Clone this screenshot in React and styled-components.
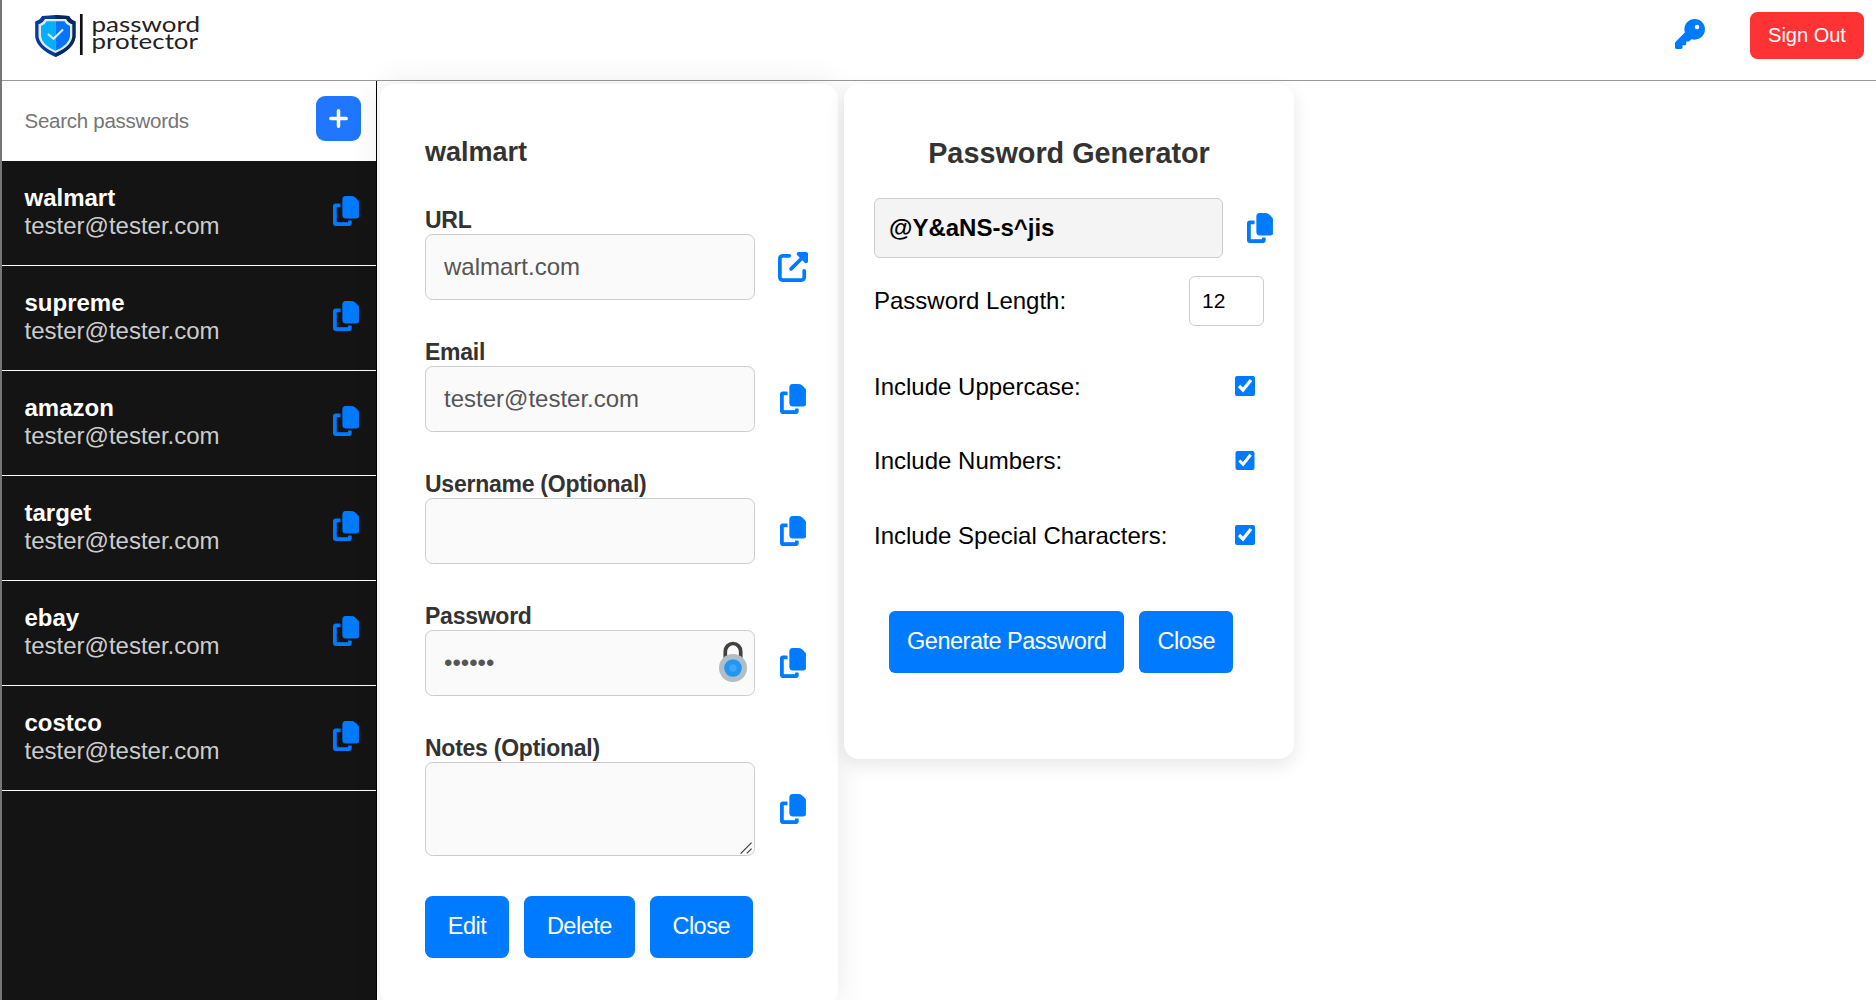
import React from "react";
import styled, { createGlobalStyle, css } from "styled-components";
import { FaKey, FaUpRightFromSquare } from "react-icons/fa6";

const GlobalStyle = createGlobalStyle`
  *, *::before, *::after { box-sizing: border-box; }
  html, body { margin: 0; height: 100%; overflow: hidden; }
  body, input, textarea, button { font-family: "Liberation Sans", Arial, sans-serif; }
  body { background: #fff; color: #000; font-size: 24px; }
`;

const Page = styled.div`
  display: flex;
  flex-direction: column;
  height: 1000px;
  border-left: 2px solid #767676;
  overflow: hidden;
`;

const Header = styled.header`
  flex: none;
  display: flex;
  align-items: flex-start;
  justify-content: space-between;
  height: 81px;
  padding: 0 12px 0 32px;
  border-bottom: 1px solid #999;
`;

const LogoSvg = styled.svg`
  display: block;
  width: 180px;
  height: 70px;
`;

const HeaderActions = styled.div`
  display: flex;
  align-items: flex-start;
  gap: 45px;
  padding-top: 12px;
`;

const IconButton = styled.button`
  flex: none;
  display: flex;
  align-items: center;
  justify-content: center;
  width: 30px;
  height: 30px;
  padding: 0;
  margin-top: ${(p) => p.$top || 0}px;
  border: 0;
  background: none;
  color: #007bff;
  font-size: 30px;
  cursor: pointer;
  svg { display: block; flex: none; }
`;

const SignOut = styled.button`
  width: 114px;
  height: 47px;
  padding: 0 0 1px;
  border: 0;
  border-radius: 7.5px;
  background: #ff3333;
  color: #fff;
  font-size: 20px;
`;

const Main = styled.main`
  flex: 1;
  min-height: 0;
  display: flex;
  align-items: flex-start;
`;

const Sidebar = styled.aside`
  flex: none;
  width: 375px;
  height: 919px;
  border-right: 1px solid #000;
  background: #141414;
`;

const SearchBar = styled.div`
  display: flex;
  align-items: flex-start;
  justify-content: space-between;
  height: 80px;
  padding: 15px 15px 0 22.5px;
  background: #fff;
`;

const SearchInput = styled.input`
  width: 240px;
  height: 50px;
  padding: 0;
  border: 0;
  outline: 0;
  background: none;
  font-size: 20.5px;
  letter-spacing: -0.27px;
  &::placeholder { color: #757575; opacity: 1; }
`;

const AddButton = styled.button`
  display: flex;
  align-items: center;
  justify-content: center;
  width: 45px;
  height: 45px;
  padding: 0;
  border: 0;
  border-radius: 9px;
  background: #2176ff;
  color: #fff;
`;

const Entry = styled.div`
  display: flex;
  justify-content: space-between;
  height: 105px;
  padding: 23px 15px 0 22.5px;
  border-bottom: 1px solid #fff;
`;

const EntryText = styled.div`
  display: flex;
  flex-direction: column;
  line-height: 28px;
  color: #ccc;
`;

const EntryName = styled.strong`
  color: #fff;
`;

const Card = styled.section`
  flex: none;
  background: #fff;
`;

const DetailCard = styled(Card)`
  width: 458px;
  height: 921px;
  margin: 3px 0 0 3px;
  padding: 53px 30px 0 45px;
  border-radius: 15px;
  box-shadow: 0 0 32px rgba(0, 0, 0, 0.09);
`;

const DetailTitle = styled.h3`
  margin: 0;
  font-size: 27px;
  line-height: 31px;
  color: #333;
`;

const Fields = styled.div`
  display: flex;
  flex-direction: column;
  gap: 40px;
  margin-top: 40px;
`;

const Field = styled.div`
  display: flex;
  flex-direction: column;
`;

const Label = styled.label`
  height: 26px;
  font-size: 23px;
  letter-spacing: -0.25px;
  line-height: 24px;
  font-weight: bold;
  color: #333;
`;

const FieldRow = styled.div`
  display: flex;
  align-items: center;
  gap: 23px;
`;

const InputWrap = styled.div`
  position: relative;
  display: flex;
  width: 330px;
`;

const inputLook = css`
  display: block;
  width: 100%;
  height: ${(p) => p.$height || 66}px;
  padding: 0 18px;
  border: 1px solid #ccc;
  border-radius: 7.5px;
  outline: 0;
  background: #fafafa;
  color: #555;
  font-size: 24px;
`;

const Input = styled.input`${inputLook}`;
const TextArea = styled.textarea`
  ${inputLook}
  resize: none;
`;

const LockBadge = styled.svg`
  position: absolute;
  top: 10px;
  right: 7.5px;
  width: 30px;
  height: 43px;
`;

const Grip = styled.svg`
  position: absolute;
  right: 3px;
  bottom: 2px;
  width: 12px;
  height: 12px;
  pointer-events: none;
`;

const Actions = styled.div`
  display: flex;
  gap: 15px;
  margin-top: ${(p) => p.$top}px;
  padding-left: ${(p) => p.$indent || 0}px;
`;

const Button = styled.button`
  height: 62px;
  padding: 0 ${(p) => p.$pad}px 2px;
  border: 0;
  border-radius: ${(p) => p.$radius}px;
  background: #007bff;
  color: #fff;
  font-size: 23.5px;
  letter-spacing: -0.5px;
  white-space: nowrap;
`;

const GeneratorCard = styled(Card)`
  position: relative;
  width: 450px;
  height: 675px;
  margin: 3px 0 0 6px;
  padding: 53px 30px 0;
  border-radius: 15px;
  box-shadow: 0 6px 18px rgba(0, 0, 0, 0.1);
`;

const GeneratorTitle = styled.h2`
  margin: 0;
  font-size: 28.8px;
  line-height: 33px;
  text-align: center;
  color: #333;
`;

const OutputRow = styled.div`
  display: flex;
  align-items: center;
  gap: 22px;
  margin-top: 28px;
`;

const Output = styled.div`
  flex: none;
  display: flex;
  align-items: center;
  width: 349px;
  height: 60px;
  padding: 0 14px;
  border: 1px solid #ccc;
  border-radius: 6px;
  background: #f4f4f4;
  font-weight: bold;
`;

const LengthRow = styled.div`
  display: flex;
  align-items: center;
  justify-content: space-between;
  margin-top: 18px;
`;

const LengthInput = styled.input`
  width: 75px;
  height: 50px;
  padding: 0 0 0 12px;
  border: 1px solid #ccc;
  border-radius: 6px;
  outline: 0;
  background: #fff;
  color: #000;
  font-size: 21px;
`;

const Options = styled.div`
  display: flex;
  flex-direction: column;
  margin-top: 23.5px;
`;

const Option = styled.label`
  display: flex;
  align-items: center;
  justify-content: space-between;
  height: 74.5px;
  padding-right: 9.5px;
`;

const Checkbox = styled.input`
  width: 19.5px;
  height: 19.5px;
  margin: 0 0 1.5px;
  accent-color: #007bff;
`;

const ENTRIES = ["walmart", "supreme", "amazon", "target", "ebay", "costco"];
const EMAIL = "tester@tester.com";

function CopyIcon() {
  return (
    <svg width="26.25" height="30" viewBox="0 0 26.25 30" fill="currentColor" stroke="currentColor" strokeLinejoin="round">
      <path
        d="M12.2 0.5 H18.4 Q20.6 0.5 22.2 1.9 L24.2 3.7 Q25.75 5.2 25.75 7.2 V19.7 Q25.75 22 23.5 22 H12.2 Q9.9 22 9.9 19.7 V2.8 Q9.9 0.5 12.2 0.5Z"
        strokeWidth="1"
      />
      <path
        d="M2.8 8.1 H6.9 V10.7 H3.15 V26.85 H15.6 V25 H18.1 V27.1 Q18.1 29.4 15.9 29.4 H2.8 Q0.6 29.4 0.6 27.1 V10.3 Q0.6 8.1 2.8 8.1Z"
        strokeWidth="1.2"
      />
    </svg>
  );
}

const FIELDS = [
  { label: "URL", value: "walmart.com", icon: FaUpRightFromSquare },
  { label: "Email", value: EMAIL },
  { label: "Username (Optional)", value: "" },
  { label: "Password", value: "tester", type: "password" },
  { label: "Notes (Optional)", value: "", area: true },
];

function PlusIcon() {
  return (
    <svg width="19" height="19" viewBox="0 0 19 19" stroke="currentColor" strokeWidth="3.5" strokeLinecap="round">
      <path d="M9.5 1.8 V17.2 M1.8 9.5 H17.2" />
    </svg>
  );
}

function Logo() {
  return (
    <LogoSvg viewBox="34 0 180 70" aria-label="password protector">
      <path d="M42 16 Q50 15.5 55.5 15 Q61 15.5 69 16 Q71 20 75.5 21.5 V37 Q74 49 55.5 57 Q37 49 35.2 37 V21.5 Q40 20 42 16Z" fill="#063b98" />
      <path d="M55.5 15 Q61 15.5 69 16 Q71 20 75.5 21.5 V37 Q74 49 55.5 57Z" fill="#06285f" />
      <path d="M45 19 H66 Q68 23 72.3 24.2 V36.5 Q71 46.5 55.5 53 Q40 46.5 38.5 36.5 V24.2 Q43 23 45 19Z" fill="#dfecfa" />
      <path d="M46.5 21.2 H55.5 V50.8 Q41.5 44.5 41 36 V25.9 Q45 24.8 46.5 21.2Z" fill="#06aefc" />
      <path d="M64.5 21.2 H55.5 V50.8 Q69.5 44.5 70 36 V25.9 Q66 24.8 64.5 21.2Z" fill="#0674fb" />
      <path d="M48 34 L53.5 38.8 L63 29.5" fill="none" stroke="#d9edff" strokeWidth="2.2" />
      <path d="M81.3 14 V55" stroke="#111" strokeWidth="2.7" />
      <g fill="#222" fontFamily="Lato, sans-serif" fontSize="21.5">
        <text x="91.5" y="32.3" textLength="108.5" lengthAdjust="spacingAndGlyphs">password</text>
        <text x="91.5" y="49.3" textLength="106.5" lengthAdjust="spacingAndGlyphs">protector</text>
      </g>
    </LogoSvg>
  );
}

function Lock() {
  return (
    <LockBadge viewBox="0 0 30 43">
      <path d="M7.3 19 V11.5 A7.7 8 0 0 1 22.7 11.5 V19" fill="none" stroke="#424242" strokeWidth="3.7" />
      <circle cx="15" cy="28" r="14" fill="#b0bec5" />
      <circle cx="15" cy="28" r="8.8" fill="#2196f3" />
      <circle cx="15" cy="28" r="3.7" fill="#42a5f5" />
    </LockBadge>
  );
}

export default function App() {
  return (
    <Page>
      <GlobalStyle />
      <Header>
        <Logo />
        <HeaderActions>
          <IconButton $top={7} aria-label="Password generator"><FaKey /></IconButton>
          <SignOut>Sign Out</SignOut>
        </HeaderActions>
      </Header>
      <Main>
        <Sidebar>
          <SearchBar>
            <SearchInput placeholder="Search passwords" />
            <AddButton aria-label="Add"><PlusIcon /></AddButton>
          </SearchBar>
          {ENTRIES.map((name) => (
            <Entry key={name}>
              <EntryText>
                <EntryName>{name}</EntryName>
                <span>{EMAIL}</span>
              </EntryText>
              <IconButton $top={12} aria-label="Copy"><CopyIcon /></IconButton>
            </Entry>
          ))}
        </Sidebar>
        <DetailCard>
          <DetailTitle>walmart</DetailTitle>
          <Fields>
            {FIELDS.map(({ label, value, type, area, icon: Icon = CopyIcon }) => (
              <Field key={label}>
                <Label>{label}</Label>
                <FieldRow>
                  <InputWrap>
                    {area ? (
                      <TextArea $height={94} defaultValue={value} />
                    ) : (
                      <Input type={type || "text"} defaultValue={value} />
                    )}
                    {type === "password" && <Lock />}
                    {area && (
                      <Grip viewBox="0 0 12 12">
                        <path d="M0.6 11.6 L11.6 0.6 M6.8 11.4 L11.6 6.6" stroke="#444" strokeWidth="1.3" />
                      </Grip>
                    )}
                  </InputWrap>
                  <IconButton aria-label={label}><Icon /></IconButton>
                </FieldRow>
              </Field>
            ))}
          </Fields>
          <Actions $top={40}>
            <Button $pad={22.8} $radius={7.5}>Edit</Button>
            <Button $pad={22.8} $radius={7.5}>Delete</Button>
            <Button $pad={22.8} $radius={7.5}>Close</Button>
          </Actions>
        </DetailCard>
        <GeneratorCard>
          <GeneratorTitle>Password Generator</GeneratorTitle>
          <OutputRow>
            <Output>@Y&amp;aNS-s^jis</Output>
            <IconButton aria-label="Copy"><CopyIcon /></IconButton>
          </OutputRow>
          <LengthRow>
            <span>Password Length:</span>
            <LengthInput defaultValue="12" />
          </LengthRow>
          <Options>
            {["Include Uppercase:", "Include Numbers:", "Include Special Characters:"].map((text) => (
              <Option key={text}>
                <span>{text}</span>
                <Checkbox type="checkbox" defaultChecked />
              </Option>
            ))}
          </Options>
          <Actions $top={38} $indent={15}>
            <Button $pad={18.1} $radius={6}>Generate Password</Button>
            <Button $pad={18.1} $radius={6}>Close</Button>
          </Actions>
        </GeneratorCard>
      </Main>
    </Page>
  );
}
